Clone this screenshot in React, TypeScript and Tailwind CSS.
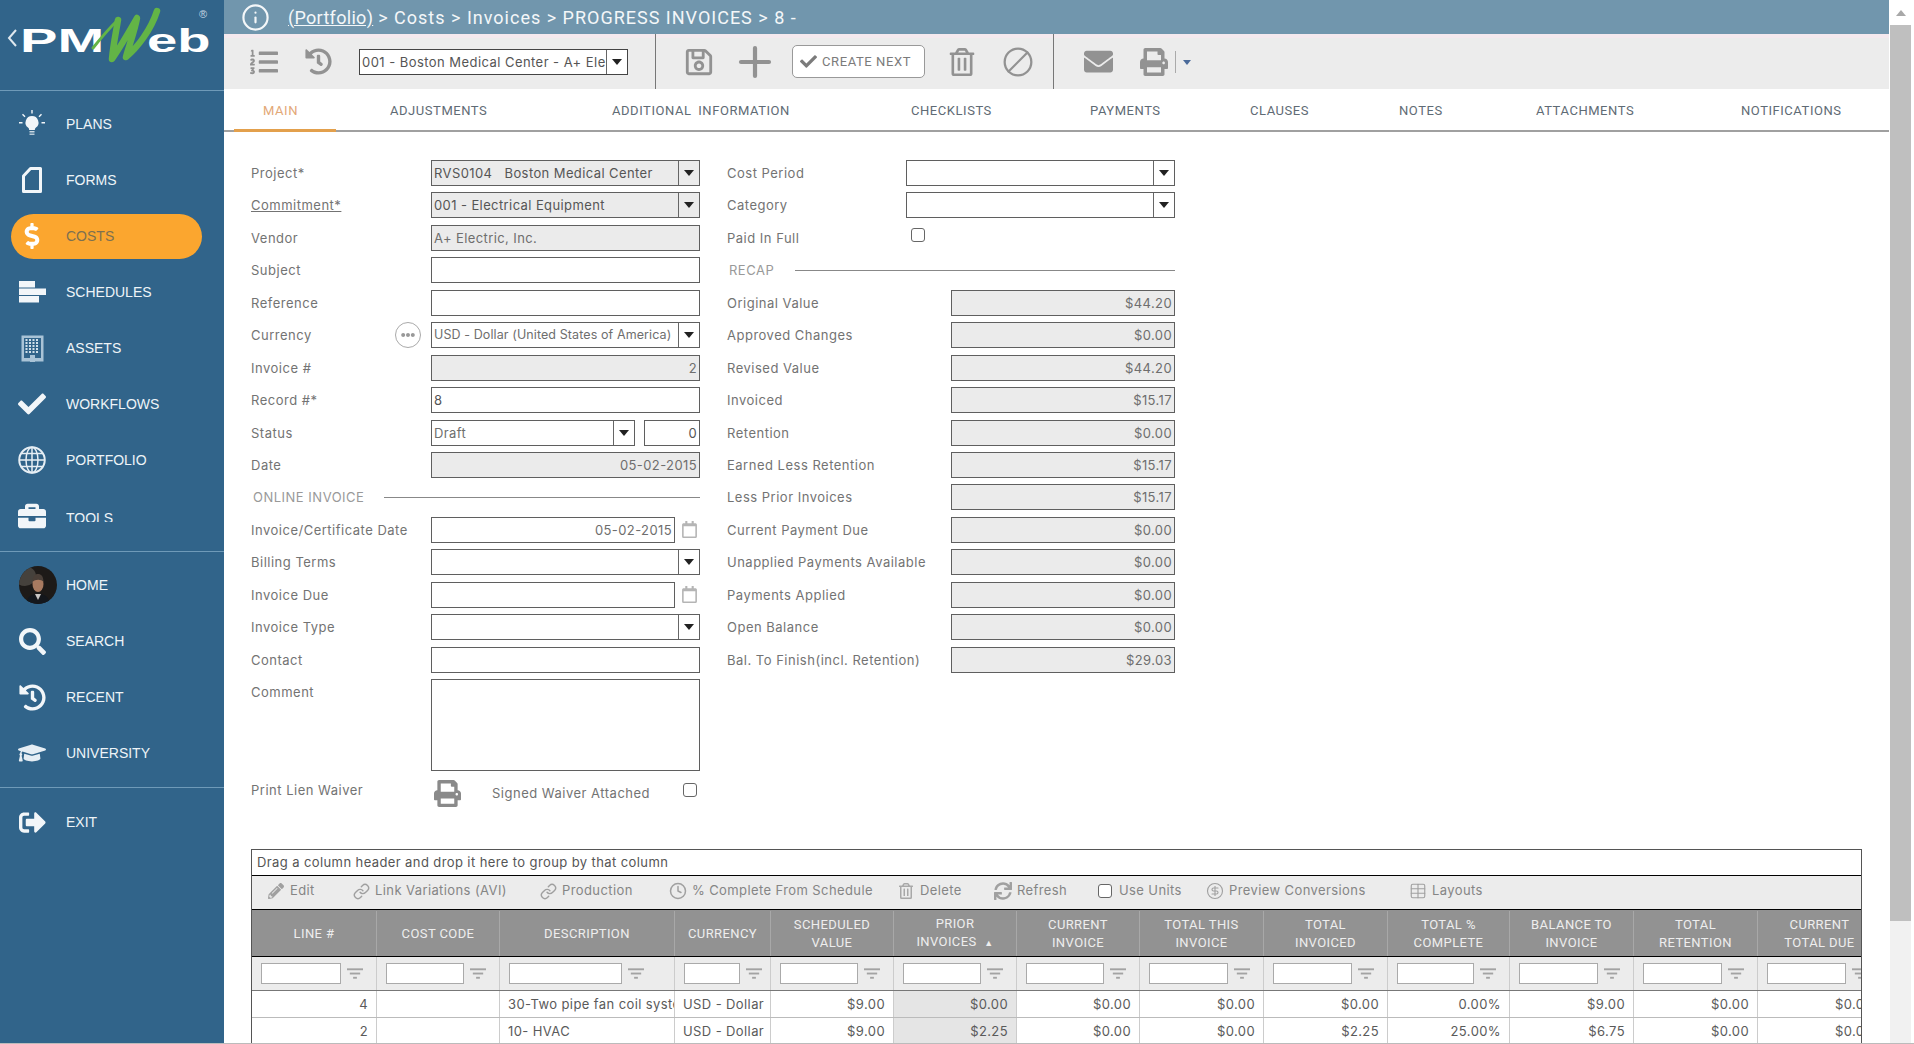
import type { ReactNode } from "react";
import clsx from "clsx";
import { Ban, CircleDollarSign, Clock, Info, Link, Plus, Table } from "lucide-react";
import {
  FaBriefcase,
  FaCheck,
  FaDollarSign,
  FaEllipsisH,
  FaEnvelope,
  FaGraduationCap,
  FaHistory,
  FaListOl,
  FaPencilAlt,
  FaPrint,
  FaRegCalendar,
  FaRegSave,
  FaRegTrashAlt,
  FaSearch,
  FaSignOutAlt,
  FaSync,
} from "react-icons/fa";

const Bulb = () => (
  <svg width="28" height="28" viewBox="0 0 28 28" fill="#f2f6f9">
    <path d="M14 6a6.5 6.5 0 0 0-4 11.6c.8.7 1.2 1.4 1.2 2.4h5.6c0-1 .4-1.7 1.2-2.4A6.500 6.500 0 0 0 14 6z" />
    <rect x="11.500" y="21" width="5" height="1.500" opacity=".8" />
    <rect x="11.500" y="23.500" width="5" height="1.500" opacity=".7" />
    <path d="M13.300 0h1.400v3.500h-1.400zM4 4.800l1-1 2.500 2.500-1 1zM24 4.800l-1-1-2.500 2.500 1 1zM1 12h3.500v1.400H1zM23.500 12H27v1.400h-3.500z" />
  </svg>
);

const FormIcon = () => (
  <svg width="20" height="26" viewBox="0 0 20 26" fill="none" stroke="#f2f6f9" strokeWidth="3">
    <path d="M1.500 9 8.500 1.500h10v23h-17z" strokeLinejoin="round" />
  </svg>
);

const GanttIcon = () => (
  <svg width="27" height="22" viewBox="0 0 27 22" fill="#f2f6f9">
    <rect x="0" y="0" width="16" height="6.500" />
    <rect x="0" y="7.500" width="27" height="6.500" />
    <rect x="0" y="15" width="20" height="6.500" />
  </svg>
);

const BuildingIcon = () => (
  <svg width="23" height="27" viewBox="0 0 23 27">
    <rect x="0.500" y="0.500" width="22" height="26" fill="#a9c3d6" />
    <rect x="3" y="3" width="17" height="20" fill="#31648a" />
    {[4, 7, 10, 13, 16].map((y) =>
      [4.500, 8, 11.500, 15].map((x) => (
        <rect key={`${x}-${y}`} x={x} y={y} width="2" height="2" fill="#cfdfe9" />
      )),
    )}
    <rect x="9" y="20" width="5" height="7" fill="#a9c3d6" />
  </svg>
);

const GlobeIcon = () => (
  <svg width="28" height="28" viewBox="0 0 28 28" fill="none" stroke="#e6eef4" strokeWidth="1.500">
    <circle cx="14" cy="14" r="12.750" strokeWidth="2" />
    <ellipse cx="14" cy="14" rx="6" ry="12.750" />
    <path d="M14 1v26M1 14h26M3 7.500h22M3 20.500h22" />
  </svg>
);

const Avatar = () => (
  <svg width="38" height="38" viewBox="0 0 38 38" className="shrink-0 translate-x-[6px] rounded-full">
    <rect width="38" height="38" fill="#1d1a18" />
    <ellipse cx="6" cy="10" rx="11" ry="10" fill="#45413c" />
    <path d="M7 38c1-8 6-10 12-10s11 2 12 10z" fill="#14171c" />
    <path d="M16 28l3 6 3-6z" fill="#c9c6c4" />
    <ellipse cx="19" cy="18" rx="5.500" ry="8" fill="#a87a60" />
    <path d="M13.500 16c0-6 2.500-8 5.500-8s5.500 2 5.500 8c-2-3-8.500-3-11 0z" fill="#4a3f38" />
  </svg>
);

const FilterIcon = () => (
  <svg width="16" height="12" viewBox="0 0 17 12" fill="#a3a3a3" className="shrink-0">
    <rect x="0" y="0" width="17" height="2" />
    <rect x="3" y="4.500" width="11" height="2" />
    <rect x="6.500" y="9" width="4" height="2" />
  </svg>
);

const Caret = () => (
  <svg width="10" height="6" viewBox="0 0 10 6" fill="#222">
    <path d="M0 0h10L5 6z" />
  </svg>
);

const Logo = () => (
  <div className="relative h-[91px] border-b border-[#6f9ab8] font-['Liberation_Sans',sans-serif] text-white">
    <svg width="10" height="18" viewBox="0 0 10 18" fill="none" stroke="#dfe8ee" strokeWidth="2" className="absolute left-[7px] top-[29px]">
      <path d="M9 1 2 9l7 8" />
    </svg>
    <span className="absolute left-[20px] top-[20px] origin-left scale-x-[1.65] text-[34px] leading-[40px] font-bold">PM</span>
    <span className="absolute left-[147px] top-[20px] origin-left scale-x-[1.6] text-[34px] leading-[40px] font-bold">eb</span>
    <svg width="80" height="66" viewBox="0 0 80 66" className="absolute left-[85px] top-0" fill="none" stroke="#63b446" strokeLinejoin="round" strokeLinecap="round">
      <path d="M8 48 C16 38 24 28 33 20" strokeWidth="3" />
      <path d="M33 20 C31 32 28 46 27 59 C36 46 44 32 52 18 C50 30 44 46 41 57 C52 48 66 30 72 11" strokeWidth="6.500" />
    </svg>
    <span className="absolute left-[199px] top-[6px] text-[11px] text-[#c5d6e2]">®</span>
  </div>
);

type NavProps = { label: string; icon: ReactNode; active?: boolean; clip?: boolean };

const NavItem = ({ label, icon, active, clip }: NavProps) => (
  <div className="flex h-[56px] items-center">
    <div
      className={clsx(
        "ml-[11px] flex h-[45px] w-[191px] items-center rounded-full pl-[3px]",
        active ? "bg-[#fba62f] text-[#7d7050]" : "text-[#eef4f8]",
      )}
    >
      <div className="flex w-[36px] shrink-0 justify-center">{icon}</div>
      <span className={clsx("ml-[16px] text-[14px] leading-[16px]", clip && "h-[12px] overflow-hidden")}>{label}</span>
    </div>
  </div>
);

const Sidebar = () => (
  <aside className="w-[224px] shrink-0 bg-[#31648a] font-['Liberation_Sans',sans-serif]">
    <Logo />
    <div className="mt-[5px]">
      <NavItem label="PLANS" icon={<Bulb />} />
      <NavItem label="FORMS" icon={<FormIcon />} />
      <NavItem label="COSTS" active icon={<FaDollarSign size={26} color="#fff" />} />
      <NavItem label="SCHEDULES" icon={<GanttIcon />} />
      <NavItem label="ASSETS" icon={<BuildingIcon />} />
      <NavItem label="WORKFLOWS" icon={<FaCheck size={28} color="#f2f6f9" />} />
      <NavItem label="PORTFOLIO" icon={<GlobeIcon />} />
      <NavItem label="TOOLS" clip icon={<FaBriefcase size={28} color="#f2f6f9" />} />
    </div>
    <div className="mt-[7px] border-t border-[#6f9ab8] pt-[5px]">
      <NavItem label="HOME" icon={<Avatar />} />
      <NavItem label="SEARCH" icon={<FaSearch size={27} color="#f2f6f9" />} />
      <NavItem label="RECENT" icon={<FaHistory size={27} color="#f2f6f9" />} />
      <NavItem label="UNIVERSITY" icon={<FaGraduationCap size={28} color="#e6eef4" />} />
    </div>
    <div className="mt-[6px] border-t border-[#6f9ab8] pt-[6px]">
      <NavItem label="EXIT" icon={<FaSignOutAlt size={27} color="#f2f6f9" />} />
    </div>
  </aside>
);

const Breadcrumb = () => (
  <div className="flex h-[34px] shrink-0 items-center bg-[#7196ad] pl-[17px] font-['Roboto',sans-serif] text-[18px] text-[#f4f7f9]">
    <Info size={29} strokeWidth={1.800} />
    <span className="ml-[18px] tracking-[0.3px] underline">(Portfolio)</span>
    <span className="ml-[5px] tracking-[1px]">{"> Costs > Invoices > PROGRESS INVOICES > 8 -"}</span>
  </div>
);

const Toolbar = () => (
  <div className="flex h-[55px] shrink-0 items-center border-t-[4px] border-[#f4e9ee] bg-[#ececec] pb-[4px] text-[#929292]">
    <FaListOl size={28} className="ml-[26px]" />
    <FaHistory size={27} className="ml-[27px]" />
    <div className="ml-[27px] flex h-[26px] w-[269px] border border-[#444] bg-white text-[13px] leading-[24px] tracking-[0.45px] text-[#555]">
      <span className="w-[247px] overflow-hidden whitespace-nowrap pl-[2px]">001 - Boston Medical Center - A+ Electric</span>
      <span className="flex w-[21px] items-center justify-center border-l border-[#666]">
        <Caret />
      </span>
    </div>
    <div className="ml-[27px] h-[55px] w-px self-start -mt-[4px] bg-[#777]" />
    <FaRegSave size={30} className="ml-[28px]" />
    <Plus size={48} strokeWidth={2.100} className="ml-[17px] shrink-0" />
    <div className="ml-[13px] flex h-[33px] w-[133px] shrink-0 items-center rounded-[5px] border border-[#999] bg-white pl-[7px] font-['Roboto',sans-serif] text-[13px] tracking-[0.6px] text-[#7b7b7b]">
      <FaCheck size={17} />
      <span className="ml-[5px]">CREATE NEXT</span>
    </div>
    <FaRegTrashAlt size={28} className="ml-[23px]" />
    <Ban size={32} strokeWidth={1.700} className="ml-[26px] -scale-x-100" />
    <div className="ml-[19px] h-[55px] w-px self-start -mt-[4px] bg-[#777]" />
    <FaEnvelope size={29} className="ml-[30px]" />
    <FaPrint size={28} className="ml-[27px]" />
    <div className="ml-[7px] h-[22px] w-px bg-[#aaa]" />
    <svg width="8" height="5" viewBox="0 0 8 5" fill="#4a6a9a" className="ml-[7px] mt-[2px]">
      <path d="M0 0h8L4 5z" />
    </svg>
  </div>
);

const tabs = [
  { label: "ADJUSTMENTS", cls: "w-[222px]" },
  { label: "ADDITIONAL INFORMATION", cls: "w-[299px]" },
  { label: "CHECKLISTS", cls: "w-[179px]" },
  { label: "PAYMENTS", cls: "w-[160px]" },
  { label: "CLAUSES", cls: "w-[149px]" },
  { label: "NOTES", cls: "w-[137px]" },
  { label: "ATTACHMENTS", cls: "w-[205px]" },
  { label: "NOTIFICATIONS", cls: "w-[120px]" },
];

const Tabs = () => (
  <div className="flex h-[43px] shrink-0 border-b-2 border-[#a0a0a0] font-['Roboto',sans-serif] text-[13px] tracking-[0.55px] text-[#5f6b75] [word-spacing:3px]">
    <div className="ml-[10px] h-[43px] w-[102px] border-b-[3px] border-[#e3a04c] pl-[29px] pt-[12px] leading-[20px] text-[#e3a877]">MAIN</div>
    <div className="ml-[54px] flex">
      {tabs.map((t) => (
        <div key={t.label} className={clsx(t.cls, "whitespace-nowrap pt-[12px] leading-[20px]")}>
          {t.label}
        </div>
      ))}
    </div>
  </div>
);

type FieldProps = { value?: string; disabled?: boolean; right?: boolean; dark?: boolean; select?: boolean; className?: string };

const Field = ({ value, disabled, right, dark, select, className }: FieldProps) => (
  <div
    className={clsx(
      "flex h-[26px] border border-[#5f5f5f] text-[13px] leading-[24px] tracking-[0.4px]",
      disabled ? "bg-[#ebebeb]" : "bg-white",
      dark ? "text-[#555]" : "text-[#6e6e6e]",
      className,
    )}
  >
    <span className={clsx("min-w-0 flex-1 overflow-hidden whitespace-pre px-[2px]", right && "text-right")}>{value}</span>
    {select && (
      <span className="flex w-[21px] shrink-0 items-center justify-center border-l border-[#666]">
        <Caret />
      </span>
    )}
  </div>
);

const Label = ({ children, className }: { children: ReactNode; className?: string }) => (
  <span className={clsx("whitespace-nowrap text-[13px] leading-[26px] tracking-[0.5px] text-[#737373]", className)}>{children}</span>
);

const Row = ({ label, under, children }: { label: string; under?: boolean; children?: ReactNode }) => (
  <div className="flex h-[26px] items-start">
    <Label className={clsx("w-[180px] shrink-0", under && "underline")}>{label}</Label>
    <div className="min-w-0 flex-1">{children}</div>
  </div>
);

const Section = ({ title, lineCls }: { title: string; lineCls: string }) => (
  <div className="flex h-[26px] items-center pl-[2px] text-[13px] tracking-[0.5px] text-[#999]">
    <span className={lineCls}>{title}</span>
    <div className="h-px flex-1 bg-[#888]" />
  </div>
);

const CalField = ({ value }: { value?: string }) => (
  <div className="flex items-center">
    <Field value={value} right className="w-[244px]" />
    <FaRegCalendar size={17} color="#b5b5b5" className="ml-[6px]" />
  </div>
);

const LeftForm = () => (
  <div className="flex w-[449px] shrink-0 flex-col gap-[6.450px]">
    <Row label="Project*"><Field disabled select dark value="RVS0104   Boston Medical Center" /></Row>
    <Row label="Commitment*" under><Field disabled select dark value="001 - Electrical Equipment" /></Row>
    <Row label="Vendor"><Field disabled value="A+ Electric, Inc." /></Row>
    <Row label="Subject"><Field /></Row>
    <Row label="Reference"><Field /></Row>
    <div className="relative">
      <Row label="Currency"><Field select value="USD - Dollar (United States of America)" className="!text-[12.500px] !tracking-[0.1px]" /></Row>
      <div className="absolute left-[144px] top-0 flex h-[26px] w-[26px] items-center justify-center rounded-full border border-[#aaa]">
        <FaEllipsisH size={14} color="#999" />
      </div>
    </div>
    <Row label="Invoice #"><Field disabled right value="2" /></Row>
    <Row label="Record #*"><Field dark value="8" /></Row>
    <Row label="Status">
      <div className="flex justify-between">
        <Field select value="Draft" className="w-[204px]" />
        <Field right dark value="0" className="w-[56px]" />
      </div>
    </Row>
    <Row label="Date"><Field disabled right value="05-02-2015" /></Row>
    <Section title="ONLINE INVOICE" lineCls="w-[131px]" />
    <Row label="Invoice/Certificate Date"><CalField value="05-02-2015" /></Row>
    <Row label="Billing Terms"><Field select /></Row>
    <Row label="Invoice Due"><CalField /></Row>
    <Row label="Invoice Type"><Field select /></Row>
    <Row label="Contact"><Field /></Row>
    <div className="flex h-[92px]">
      <Label className="w-[180px] shrink-0">Comment</Label>
      <div className="flex-1 border border-[#5f5f5f]" />
    </div>
    <div className="flex h-[26px] items-start">
      <Label className="w-[183px] shrink-0">Print Lien Waiver</Label>
      <FaPrint size={27} color="#8a8a8a" className="mt-[3px] shrink-0" />
      <Label className="ml-[31px] mt-[3px] w-[191px]">Signed Waiver Attached</Label>
      <div className="mt-[6px] h-[14px] w-[14px] rounded-[3px] border border-[#666]" />
    </div>
  </div>
);

const recap = [
  ["Original Value", "$44.20"],
  ["Approved Changes", "$0.00"],
  ["Revised Value", "$44.20"],
  ["Invoiced", "$15.17"],
  ["Retention", "$0.00"],
  ["Earned Less Retention", "$15.17"],
  ["Less Prior Invoices", "$15.17"],
  ["Current Payment Due", "$0.00"],
  ["Unapplied Payments Available", "$0.00"],
  ["Payments Applied", "$0.00"],
  ["Open Balance", "$0.00"],
  ["Bal. To Finish(incl. Retention)", "$29.03"],
];

const RightForm = () => (
  <div className="ml-[27px] flex w-[448px] shrink-0 flex-col gap-[6.450px]">
    <div className="flex h-[26px]">
      <Label className="w-[179px]">Cost Period</Label>
      <Field select className="flex-1" />
    </div>
    <div className="flex h-[26px]">
      <Label className="w-[179px]">Category</Label>
      <Field select className="flex-1" />
    </div>
    <div className="flex h-[26px]">
      <Label className="w-[184px]">Paid In Full</Label>
      <div className="mt-[3px] h-[14px] w-[14px] rounded-[3px] border border-[#666]" />
    </div>
    <Section title="RECAP" lineCls="w-[66px]" />
    {recap.map(([label, value]) => (
      <div key={label} className="flex h-[26px]">
        <Label className="w-[224px]">{label}</Label>
        <Field disabled right value={value} className="flex-1" />
      </div>
    ))}
  </div>
);

const gridCols = "grid grid-cols-[125px_123px_175px_96px_123px_123px_123px_124px_124px_122px_124px_124px_124px]";

const headers: ReactNode[] = [
  "LINE #",
  "COST CODE",
  "DESCRIPTION",
  "CURRENCY",
  <>SCHEDULED<br />VALUE</>,
  <>PRIOR<br />INVOICES <span className="ml-[4px] text-[9px]">▲</span></>,
  <>CURRENT<br />INVOICE</>,
  <>TOTAL THIS<br />INVOICE</>,
  <>TOTAL<br />INVOICED</>,
  <>TOTAL %<br />COMPLETE</>,
  <>BALANCE TO<br />INVOICE</>,
  <>TOTAL<br />RETENTION</>,
  <>CURRENT<br />TOTAL DUE</>,
];

const rows = [
  ["4", "", "30-Two pipe fan coil system", "USD - Dollar", "$9.00", "$0.00", "$0.00", "$0.00", "$0.00", "0.00%", "$9.00", "$0.00", "$0.00"],
  ["2", "", "10- HVAC", "USD - Dollar", "$9.00", "$2.25", "$0.00", "$0.00", "$2.25", "25.00%", "$6.75", "$0.00", "$0.00"],
];

const leftAligned = [2, 3];

const GridTool = ({ icon, label, cls }: { icon: ReactNode; label: string; cls: string }) => (
  <div className={clsx("flex shrink-0 items-center gap-[5px]", cls)}>
    <span className="flex w-[18px] shrink-0 justify-center">{icon}</span>
    <span className="whitespace-nowrap">{label}</span>
  </div>
);

const LineGrid = () => (
  <div className="ml-[27px] w-[1611px] overflow-hidden border-x border-t border-[#555] text-[13px] tracking-[0.4px] text-[#666]">
    <div className="h-[25px] pl-[5px] leading-[25px] text-[#555]">Drag a column header and drop it here to group by that column</div>
    <div className="flex h-[34px] items-center border-t border-black bg-[#ececec] pb-[3px] pl-[15px] text-[#858585]">
      <GridTool cls="w-[85px]" label="Edit" icon={<FaPencilAlt size={16} color="#a0a0a0" />} />
      <GridTool cls="w-[187px]" label="Link Variations (AVI)" icon={<Link size={17} color="#a0a0a0" />} />
      <GridTool cls="w-[130px]" label="Production" icon={<Link size={17} color="#a0a0a0" />} />
      <GridTool cls="w-[228px]" label="% Complete From Schedule" icon={<Clock size={18} color="#a0a0a0" />} />
      <GridTool cls="w-[97px]" label="Delete" icon={<FaRegTrashAlt size={16} color="#a8a8a8" />} />
      <GridTool cls="w-[102px]" label="Refresh" icon={<FaSync size={18} color="#a0a0a0" />} />
      <GridTool cls="w-[110px]" label="Use Units" icon={<span className="h-[14px] w-[14px] rounded-[3px] border border-[#666] bg-white" />} />
      <GridTool cls="w-[203px]" label="Preview Conversions" icon={<CircleDollarSign size={18} color="#a0a0a0" strokeWidth={1.500} />} />
      <GridTool cls="w-[100px]" label="Layouts" icon={<Table size={18} color="#a0a0a0" strokeWidth={1.500} />} />
    </div>
    <div className={clsx(gridCols, "h-[48px] border-y border-black bg-[#929292] pt-px font-['Roboto',sans-serif] text-[13px] leading-[18px] tracking-[0.4px] text-[#eee]")}>
      {headers.map((h, i) => (
        <div key={i} className="flex items-center justify-center border-r border-[#a8a8a8] text-center">
          <div>{h}</div>
        </div>
      ))}
    </div>
    <div className={clsx(gridCols, "h-[34px] border-b border-[#777] bg-[#ececec]")}>
      {headers.map((_, i) => (
        <div
          key={i}
          className={clsx(
            "flex items-center gap-[6px] border-r border-[#ccc] pl-[9px]",
            i === 2 ? "pr-[30px]" : i === 3 ? "pr-[8px]" : "pr-[13px]",
          )}
        >
          <div className="h-[21px] min-w-0 flex-1 border border-[#aaa] bg-white" />
          <FilterIcon />
        </div>
      ))}
    </div>
    {rows.map((row, r) => (
      <div key={r} className={clsx(gridCols, "h-[27px] border-b border-[#bbb] leading-[27px] text-[#5a5a5a]")}>
        {row.map((cell, i) => (
          <div
            key={i}
            className={clsx(
              "overflow-hidden whitespace-nowrap border-r border-[#ccc] px-[8px]",
              !leftAligned.includes(i) && "text-right",
              i === 5 && "bg-[#e5e5e5]",
            )}
          >
            {cell}
          </div>
        ))}
      </div>
    ))}
  </div>
);

const Scrollbar = () => (
  <div className="flex w-[25px] shrink-0 flex-col items-center bg-white pr-[2px]">
    <div className="flex h-[25px] w-full items-center justify-center">
      <svg width="10" height="6" viewBox="0 0 10 6" fill="#a8a8a8">
        <path d="M0 6h10L5 0z" />
      </svg>
    </div>
    <div className="h-[896px] w-[21px] bg-[#bfbfbf]" />
    <div className="w-[21px] flex-1 bg-[#f1f1f1]" />
  </div>
);

export default function App() {
  return (
    <div className="flex h-[1044px] w-[1914px] overflow-hidden border-b border-[#bbb] bg-white font-['Inter',sans-serif]">
      <Sidebar />
      <div className="flex w-[1665px] shrink-0 flex-col">
        <Breadcrumb />
        <Toolbar />
        <Tabs />
        <div className="flex h-[717px] shrink-0 pl-[27px] pt-[28px]">
          <LeftForm />
          <RightForm />
        </div>
        <LineGrid />
      </div>
      <Scrollbar />
    </div>
  );
}
